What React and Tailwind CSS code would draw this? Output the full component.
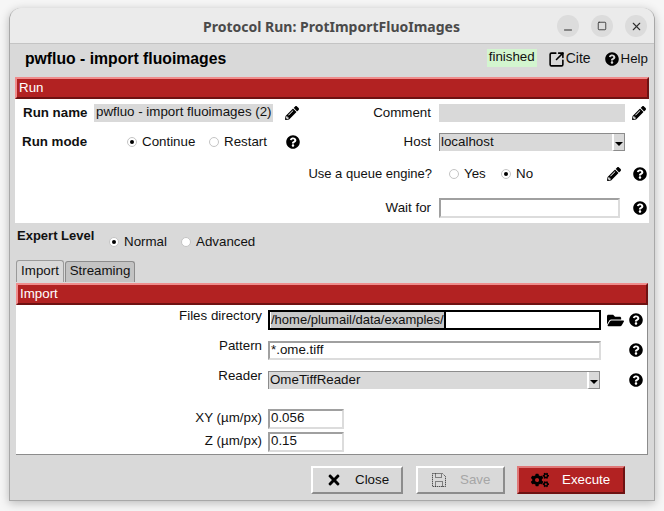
import React from 'react';
import { FaPencilAlt, FaQuestionCircle, FaFolderOpen, FaTimes, FaCogs } from 'react-icons/fa';
import { X, Minus, Square, SquareArrowOutUpRight } from 'lucide-react';

const Help = ({ className = '' }) => <FaQuestionCircle className={`text-black text-[14px] shrink-0 ${className}`} />;
const Pencil = ({ className = '' }) => <FaPencilAlt className={`text-black text-[14px] shrink-0 ${className}`} />;

const Radio = ({ on }) => (
    <span className="w-[10px] h-[10px] rounded-full bg-white border border-[#c4c4c4] flex items-center justify-center shrink-0">
        {on && <span className="w-[4px] h-[4px] rounded-full bg-black" />}
    </span>
);

const RadioOption = ({ on, label, className = '' }) => (
    <div className={`flex items-center gap-[5px] text-[13.33px] leading-4 ${className}`}>
        <Radio on={on} />
        <span>{label}</span>
    </div>
);

const SectionBar = ({ title }) => (
    <div className="h-[22px] bg-[#b22222] border-t-2 border-t-[#f08c8c] border-b-2 border-b-[#6e1212] border-l-2 border-l-[#f08c8c] border-r-2 border-r-[#6e1212] text-white text-[13.33px] leading-[17px] pl-[2px]">
        {title}
    </div>
);

const TextBox = ({ value, className = '' }) => (
    <div className={`h-5 bg-white border-2 border-t-[#a0a0a0] border-l-[#a0a0a0] border-r-[#dcdcdc] border-b-[#dcdcdc] text-[13.33px] leading-[14px] pl-[1px] overflow-hidden whitespace-nowrap ${className}`}>
        {value}
    </div>
);

const SelectBox = ({ value, className = '' }) => (
    <div className={`h-[18px] bg-[#d9d9d9] border-t border-l border-[#8c8c8c] text-[13.33px] leading-[15px] pl-[1px] flex justify-between ${className}`}>
        <span>{value}</span>
        <span className="w-[13px] h-[17px] border-l-2 border-l-white border-b border-r border-[#8c8c8c] flex items-center justify-center">
            <span className="w-0 h-0 mt-1 border-x-[4px] border-x-transparent border-t-[4px] border-t-black" />
        </span>
    </div>
);

const Label = ({ children, className = '' }) => (
    <span className={`text-[13.33px] leading-4 text-right ${className}`}>{children}</span>
);

const WinButton = ({ children }) => (
    <span className="w-[22px] h-[22px] rounded-full bg-[#dcdcdc] flex items-center justify-center text-[#2e2e2e]">{children}</span>
);

const ActionButton = ({ className = '', children }) => (
    <div className={`h-[28px] flex items-center text-[13.33px] border-2 ${className}`}>{children}</div>
);

export default function App() {
    return (
        <div className="w-[664px] h-[511px] bg-[#f6f6f6] pt-[8px] pl-[9px] overflow-hidden" style={{ fontFamily: '"Liberation Sans", Arial, sans-serif' }}>
            <div className="w-[646px] h-[493px] rounded-t-[12px] overflow-hidden bg-[#d9d9d9] text-[#111111] border-x border-b border-[#a8a8a8] shadow-[0_2px_10px_rgba(0,0,0,0.25)]">
                {/* title bar */}
                <div className="h-[36px] bg-[#ebebeb] border-b border-[#c4c4c4] flex items-center relative">
                    <div className="w-full text-center font-bold text-[14px] text-[#4a4a4a] pr-[1px] mt-[1px]" style={{ fontFamily: '"Noto Sans", sans-serif' }}>
                        Protocol Run: ProtImportFluoImages
                    </div>
                    <div className="absolute right-[7px] top-[7px] flex gap-3">
                        <WinButton><Minus size={12} className="mt-2" /></WinButton>
                        <WinButton><Square size={10} /></WinButton>
                        <WinButton><X size={13} /></WinButton>
                    </div>
                </div>

                {/* header */}
                <div className="h-[33px] flex items-center pl-[15px] pr-[6px] pb-[4px]">
                    <h1 className="font-bold text-[15.75px] text-black">pwfluo - import fluoimages</h1>
                    <div className="ml-auto flex items-center text-[13.33px]">
                        <span className="bg-[#d3f5cf] h-[18px] leading-[16px] px-[2px] mr-[11px] -mt-[1px]">finished</span>
                        <SquareArrowOutUpRight size={17} strokeWidth={2.25} className="text-black mt-[1px] mr-[1px]" />
                        <span className="mr-[14px] text-[14px]">Cite</span>
                        <Help className="mr-[2px]" />
                        <span>Help</span>
                    </div>
                </div>

                {/* run section */}
                <div className="mx-[5px]">
                    <SectionBar title="Run" />
                    <div className="bg-white h-[124px] flex flex-col">
                        <div className="h-[28px] flex items-center">
                            <span className="font-bold text-[13.33px] ml-[8px] w-[71px]">Run name</span>
                            <div className="w-[179px] h-[18px] bg-[#d9d9d9] text-[13.33px] leading-4 pl-[2px] whitespace-nowrap">pwfluo - import fluoimages (2)</div>
                            <Pencil className="ml-[12px]" />
                            <Label className="w-[132px]">Comment</Label>
                            <div className="w-[186px] h-[18px] bg-[#d9d9d9] ml-[8px]" />
                            <Pencil className="ml-[7px]" />
                        </div>
                        <div className="h-[29px] flex items-center">
                            <span className="font-bold text-[13.33px] ml-[7px] w-[105px]">Run mode</span>
                            <RadioOption on label="Continue" className="w-[82px]" />
                            <RadioOption label="Restart" className="w-[77px]" />
                            <Help />
                            <Label className="w-[131px]">Host</Label>
                            <SelectBox value="localhost" className="w-[186px] ml-[8px]" />
                        </div>
                        <div className="h-[35px] flex items-center">
                            <Label className="w-[417px] text-[13px]">Use a queue engine?</Label>
                            <RadioOption label="Yes" className="ml-[17px] w-[52px]" />
                            <RadioOption on label="No" className="w-[91px]" />
                            <Pencil className="ml-[15px]" />
                            <Help className="ml-[12px]" />
                        </div>
                        <div className="h-[32px] flex items-center pt-[2px]">
                            <Label className="w-[416px]">Wait for</Label>
                            <TextBox value="" className="w-[181px] ml-[8px]" />
                            <Help className="ml-[13px]" />
                        </div>
                    </div>
                </div>

                {/* expert level */}
                <div className="h-[37px] flex items-start pl-[7px]">
                    <span className="font-bold text-[13px] mt-[3px] w-[92px]">Expert Level</span>
                    <RadioOption on label="Normal" className="mt-[11px] w-[72px]" />
                    <RadioOption label="Advanced" className="mt-[11px]" />
                </div>

                {/* tabs */}
                <div className="flex pl-[6px] h-[22px] items-end gap-[1px] text-[13.33px]">
                    <div className="h-[22px] w-[48px] bg-[#d9d9d9] border border-b-0 border-[#9a9a9a] rounded-t-[3px] text-center leading-[19px]">Import</div>
                    <div className="h-[21px] w-[70px] bg-[#c3c3c3] border border-b-0 border-[#8c8c8c] rounded-t-[3px] text-center leading-[17px]">Streaming</div>
                </div>

                <div className="mx-[6px] mt-[1px]">
                    <SectionBar title="Import" />
                    <div className="bg-white h-[150px] border-r border-b border-[#8c8c8c] flex flex-col pt-[2px]">
                        <div className="h-[30px] flex items-start pt-[3px]">
                            <Label className="w-[246px] -mt-[2px]">Files directory</Label>
                            <div className="w-[333px] h-[20px] ml-[6px] border-2 border-black text-[13px] leading-4 pl-[1px] flex items-center">
                                <span className="bg-[#c8c8c8] h-full leading-4">/home/plumail/data/examples/</span>
                                <span className="w-[2px] h-full bg-black" />
                            </div>
                            <FaFolderOpen className="text-black text-[17px] ml-[6px] mt-[2px]" />
                            <Help className="ml-[5px] mt-[3px]" />
                        </div>
                        <div className="h-[30px] flex items-start">
                            <Label className="w-[246px] mt-[1px]">Pattern</Label>
                            <TextBox value="*.ome.tiff" className="w-[333px] ml-[6px] mt-[4px] h-[19px]" />
                            <Help className="ml-[28px] mt-[6px]" />
                        </div>
                        <div className="h-[40px] flex items-start">
                            <Label className="w-[246px] mt-[1px]">Reader</Label>
                            <SelectBox value="OmeTiffReader" className="w-[332px] ml-[6px] mt-[4px]" />
                            <Help className="ml-[29px] mt-[6px]" />
                        </div>
                        <div className="h-[23px] flex items-center">
                            <Label className="w-[246px] -mt-[2px]">XY (µm/px)</Label>
                            <TextBox value="0.056" className="w-[76px] ml-[6px] h-[20px]" />
                        </div>
                        <div className="h-[24px] flex items-center">
                            <Label className="w-[246px] -mt-[2px]">Z (µm/px)</Label>
                            <TextBox value="0.15" className="w-[76px] ml-[6px] h-[20px]" />
                        </div>
                    </div>
                </div>

                {/* footer buttons */}
                <div className="flex pl-[301px] pt-[11px]">
                    <ActionButton className="w-[92px] pl-[13px] bg-[#d9d9d9] border-t-white border-l-white border-r-[#8c8c8c] border-b-[#8c8c8c]">
                        <FaTimes className="text-black text-[16px]" />
                        <span className="ml-[13px]">Close</span>
                    </ActionButton>
                    <ActionButton className="w-[89px] ml-[13px] pl-[14px] bg-[#d9d9d9] text-[#a6a6a6] border-t-white border-l-white border-r-[#8c8c8c] border-b-[#8c8c8c]">
                        <svg width="14" height="14" viewBox="0 0 14 14" fill="none" stroke="#222" strokeWidth="1" strokeDasharray="1 1">
                            <path d="M0.5 0.5H10.5L13.5 3.5V13.5H0.5Z" />
                            <path d="M3.5 0.5V4.5H9.5V0.5M3.5 13.5V8.5H10.5V13.5" />
                        </svg>
                        <span className="ml-[14px]">Save</span>
                    </ActionButton>
                    <ActionButton className="w-[108px] ml-[12px] pl-[12px] bg-[#b22222] text-white border-t-[#e07878] border-l-[#e07878] border-r-[#6e1212] border-b-[#6e1212]">
                        <FaCogs className="text-black text-[18px]" />
                        <span className="ml-[13px]">Execute</span>
                    </ActionButton>
                </div>
            </div>
        </div>
    );
}
